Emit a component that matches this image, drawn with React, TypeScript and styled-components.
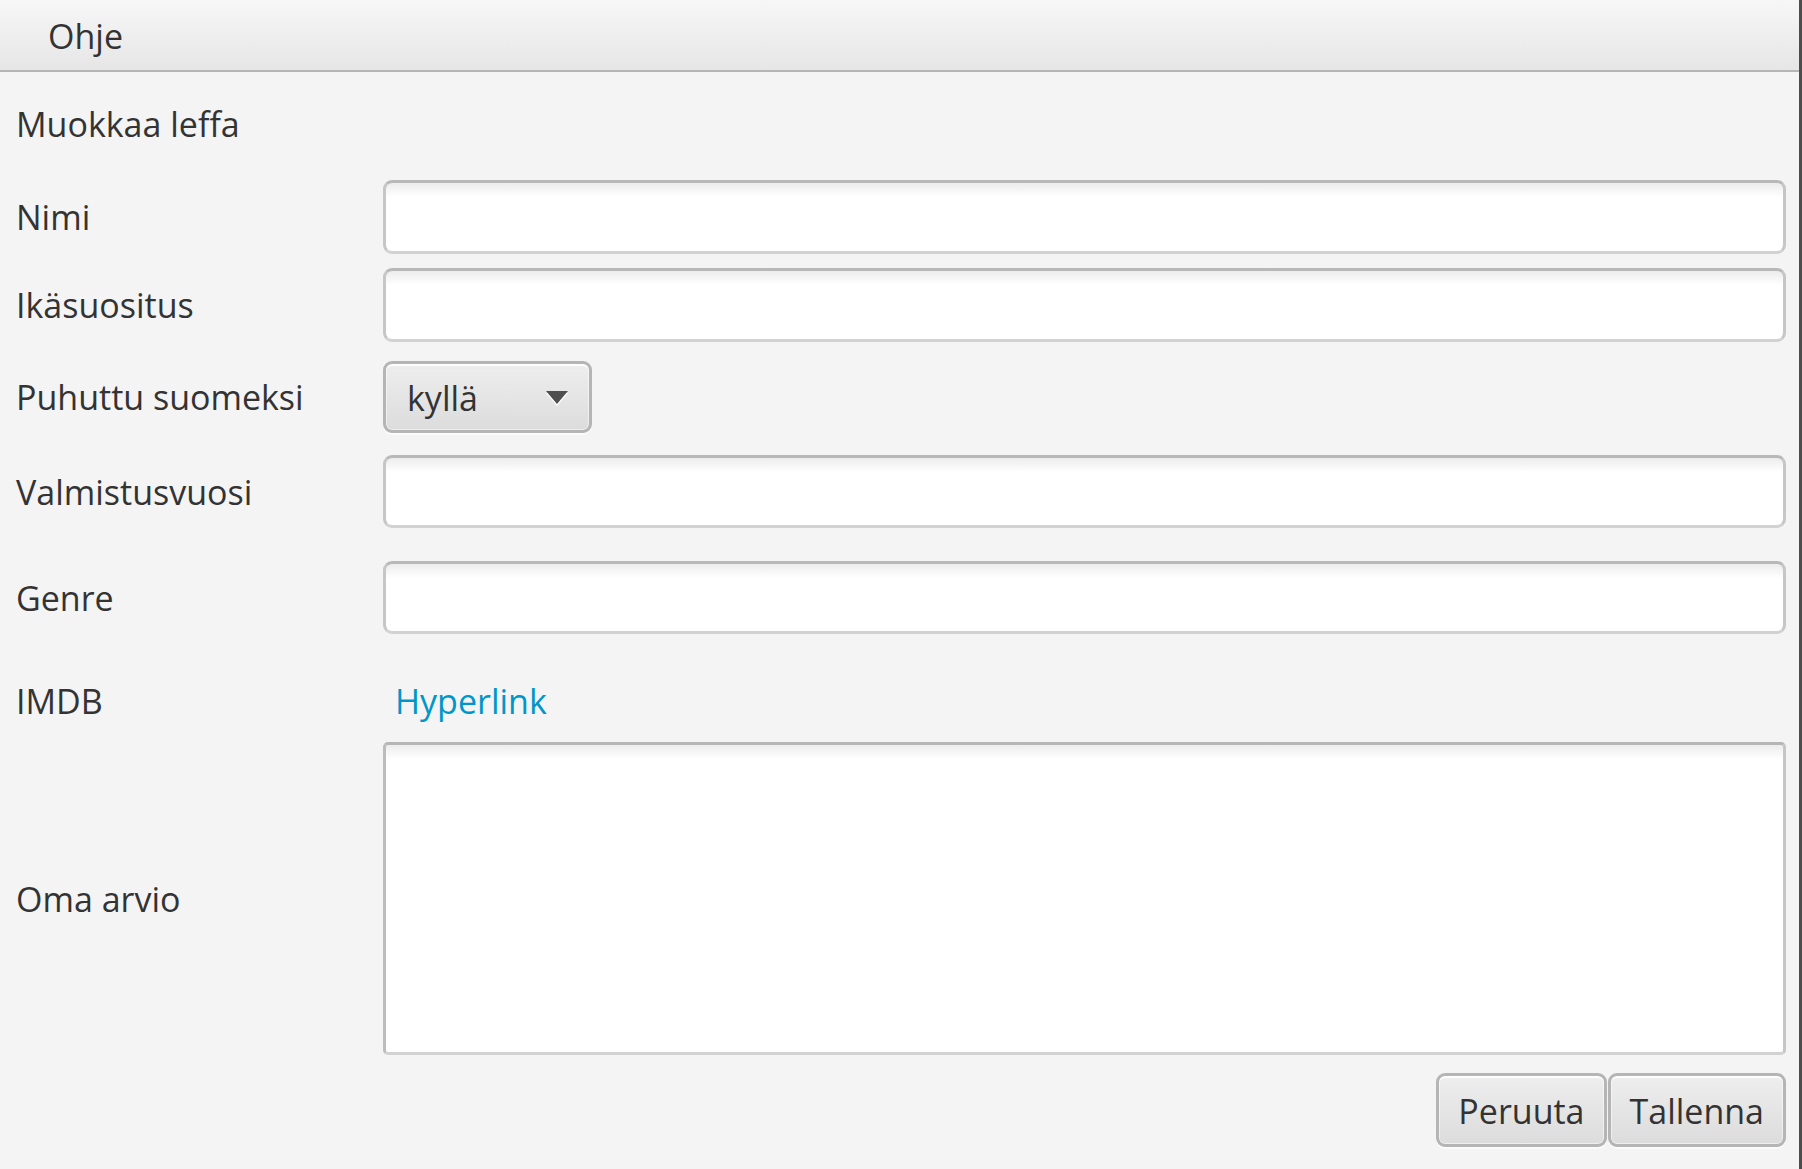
import React from "react";
import styled, { createGlobalStyle } from "styled-components";

const GlobalStyle = createGlobalStyle`
  html, body, #root {
    margin: 0;
    padding: 0;
    height: 100%;
  }
  body {
    background: #f4f4f4;
    font-family: "Open Sans", "Noto Sans", sans-serif;
    color: #333333;
  }
`;

const Window = styled.div`
  box-sizing: border-box;
  height: 100vh;
  display: flex;
  flex-direction: column;
  border-right: 3px solid #4c4c4c;
  background: #f4f4f4;
  overflow: hidden;
`;

const MenuBar = styled.div`
  height: 70px;
  flex-shrink: 0;
  display: flex;
  align-items: center;
  background: linear-gradient(#f7f7f7, #e6e6e6);
  border-bottom: 2px solid #b5b5b5;
`;

const MenuItem = styled.div`
  padding: 3px 0 0 48px;
  font-size: 34px;
  line-height: 67px;
  color: #333;
`;

const Form = styled.div`
  padding: 0 13px 0 16px;
  display: flex;
  flex-direction: column;
`;

const Title = styled.div`
  margin-top: 27px;
  height: 50px;
  line-height: 50px;
  font-size: 34px;
`;

const Row = styled.div<{ $top: number; $h: number }>`
  display: grid;
  grid-template-columns: 367px 1fr;
  align-items: center;
  margin-top: ${(p) => p.$top}px;
  height: ${(p) => p.$h}px;
`;

const Label = styled.div`
  font-size: 34px;
  line-height: 1.2;
  padding-top: 1px;
  white-space: nowrap;
`;

const TextField = styled.input`
  box-sizing: border-box;
  width: 100%;
  height: 100%;
  margin: 0;
  padding: 0 16px;
  font: inherit;
  font-size: 34px;
  border: 3px solid #c6c6c6;
  border-top-color: #b8b8b8;
  border-bottom-color: #d2d2d2;
  border-radius: 9px;
  background: linear-gradient(#ececec, #ffffff 14px);
  outline: none;
  appearance: none;
`;

const TextArea = styled.textarea`
  box-sizing: border-box;
  width: 100%;
  height: 100%;
  margin: 0;
  padding: 12px 16px;
  font: inherit;
  font-size: 34px;
  border: 3px solid #c6c6c6;
  border-top-color: #b6b6b6;
  border-left-color: #bcbcbc;
  border-bottom-color: #d2d2d2;
  border-radius: 5px;
  background: linear-gradient(#ececec, #ffffff 14px);
  outline: none;
  resize: none;
`;

const Combo = styled.div`
  box-sizing: border-box;
  justify-self: start;
  width: 209px;
  height: 100%;
  display: flex;
  align-items: center;
  justify-content: space-between;
  padding: 2px 21px 0 21px;
  border: 3px solid #b5b5b5;
  border-radius: 9px;
  background: linear-gradient(#eeeeee, #dcdcdc);
  box-shadow: inset 0 2px 0 rgba(255, 255, 255, 0.85),
    inset 0 0 0 1px rgba(255, 255, 255, 0.5), 0 2px 0 #fbfbfb;
  font-size: 34px;
  color: #333;
`;

const Arrow = styled.span`
  width: 0;
  height: 0;
  margin-top: -2px;
  border-left: 11px solid transparent;
  border-right: 11px solid transparent;
  border-top: 13px solid #4f4f4f;
  filter: drop-shadow(0 2px 0 #ffffff);
`;

const Hyperlink = styled.a`
  padding-left: 12px;
  font-size: 34px;
  color: #0096c9;
  text-decoration: none;
  cursor: pointer;
`;

const ButtonBar = styled.div`
  grid-column: 2;
  justify-self: end;
  display: flex;
  gap: 1px;
  height: 100%;
`;

const Button = styled.button`
  box-sizing: border-box;
  height: 100%;
  padding: 2px 19px 0;
  font: inherit;
  font-size: 34px;
  color: #333;
  border: 3px solid #b5b5b5;
  border-radius: 9px;
  background: linear-gradient(#eeeeee, #dcdcdc);
  box-shadow: inset 0 2px 0 rgba(255, 255, 255, 0.85),
    inset 0 0 0 1px rgba(255, 255, 255, 0.5), 0 2px 0 #fbfbfb;
  cursor: pointer;
`;

const App = () => {
  return (
    <>
      <GlobalStyle />
      <Window>
        <MenuBar>
          <MenuItem>Ohje</MenuItem>
        </MenuBar>
        <Form>
          <Title>Muokkaa leffa</Title>
          <Row $top={31} $h={74}>
            <Label>Nimi</Label>
            <TextField />
          </Row>
          <Row $top={14} $h={74}>
            <Label>Ikäsuositus</Label>
            <TextField />
          </Row>
          <Row $top={19} $h={72}>
            <Label>Puhuttu suomeksi</Label>
            <Combo>
              <span>kyllä</span>
              <Arrow />
            </Combo>
          </Row>
          <Row $top={22} $h={73}>
            <Label>Valmistusvuosi</Label>
            <TextField />
          </Row>
          <Row $top={33} $h={73}>
            <Label>Genre</Label>
            <TextField />
          </Row>
          <Row $top={42} $h={50}>
            <Label>IMDB</Label>
            <div>
              <Hyperlink>Hyperlink</Hyperlink>
            </div>
          </Row>
          <Row $top={16} $h={313}>
            <Label>Oma arvio</Label>
            <TextArea />
          </Row>
          <Row $top={18} $h={74}>
            <ButtonBar>
              <Button>Peruuta</Button>
              <Button>Tallenna</Button>
            </ButtonBar>
          </Row>
        </Form>
      </Window>
    </>
  );
};

export default App;
